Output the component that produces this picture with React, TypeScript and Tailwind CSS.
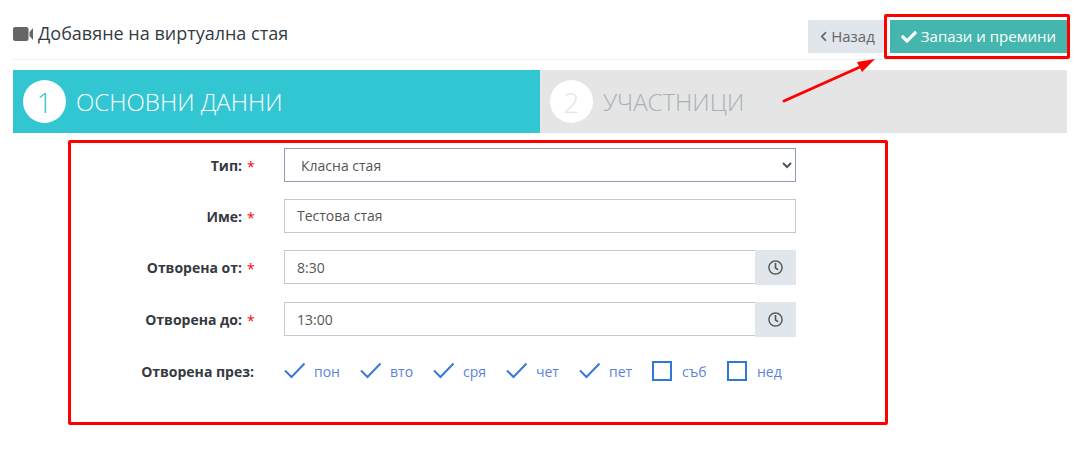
import { FaCheck, FaChevronLeft, FaRegClock } from "react-icons/fa";

const days = [
  { name: "пон", on: true, width: "w-[76px]" },
  { name: "вто", on: true, width: "w-[73px]" },
  { name: "сря", on: true, width: "w-[73px]" },
  { name: "чет", on: true, width: "w-[73px]" },
  { name: "пет", on: true, width: "w-[73px]" },
  { name: "съб", on: false, width: "w-[75px]" },
  { name: "нед", on: false, width: "w-[73px]" },
];

function FieldLabel({ text, required = true }: { text: string; required?: boolean }) {
  return (
    <div className="w-[284px] pr-[30px] flex justify-end items-center shrink-0 text-[14px] font-bold text-[#343a40]">
      <span>{text}</span>
      {required && <span className="text-[#ff0000] font-normal ml-[5px] w-[7px] pt-[2px]">*</span>}
    </div>
  );
}

function TimeField({ value }: { value: string }) {
  return (
    <div className="flex w-[512px] h-[34px]">
      <div className="flex-1 border border-[#c2cad8] border-r-0 pl-[12px] flex items-center text-[14px] text-[#555]">
        {value}
      </div>
      <div className="w-[41px] h-[35px] bg-[#e1e5ec] flex items-center justify-center">
        <FaRegClock size={15} className="text-[#555]" />
      </div>
    </div>
  );
}

function Day({ name, on, width }: { name: string; on: boolean; width: string }) {
  return (
    <div className={`flex items-center shrink-0 ${width}`}>
      <div className="w-[22px] h-[22px] flex items-center shrink-0">
        {on ? (
          <svg width="22" height="18" viewBox="0 0 22 18" fill="none">
            <path d="M1 8.5 L7.5 15 L20.5 1.5" stroke="#3a78d4" strokeWidth="2" />
          </svg>
        ) : (
          <div className="w-[20px] h-[20px] border-2 border-[#2f78d6]"></div>
        )}
      </div>
      <span className="ml-[8px] text-[14px] text-[#5b83dc]">{name}</span>
    </div>
  );
}

export default function App() {
  return (
    <div className="relative w-[1076px] h-[474px] bg-white overflow-hidden font-['Open_Sans',sans-serif]">
      <div className="pt-[20px]">
        <div className="ml-[13px] mr-[9px] flex justify-between h-[40px] border-b border-[#eeeeee]">
          <div className="flex items-start pt-[1px] text-[#333b45]">
            <svg width="20" height="14" viewBox="0 0 20 14" className="mt-[6px]">
              <rect x="0" y="0" width="15.5" height="14" rx="2" fill="#666" />
              <path d="M16.5 5 L20 1 V13 L16.5 9 Z" fill="#666" />
            </svg>
            <span className="ml-[5px] text-[18px] leading-[24px]">Добавяне на виртуална стая</span>
          </div>
          <div className="flex gap-[5px] h-[33px]">
            <button className="w-[77px] bg-[#e1e5ec] text-[#666] text-[15px] flex items-center justify-center">
              <FaChevronLeft size={11} className="text-[#666]" />
              <span className="ml-[2px]">Назад</span>
            </button>
            <button className="w-[177px] bg-[#44b6ae] text-white text-[15px] flex items-center justify-center">
              <FaCheck size={16} className="mr-[4px]" />
              Запази и премини
            </button>
          </div>
        </div>
        <div className="ml-[13px] mr-[9px] flex mt-[10px] h-[63px]">
          <div className="w-[527px] bg-[#32c5d2] flex items-center pl-[10px]">
            <div className="w-[43px] h-[43px] rounded-full bg-white flex items-center justify-center text-[#32c5d2] text-[28px] font-light">1</div>
            <span className="ml-[10px] text-[24px] font-light text-white">ОСНОВНИ ДАННИ</span>
          </div>
          <div className="flex-1 bg-[#e5e5e5] flex items-center pl-[10px]">
            <div className="w-[43px] h-[43px] rounded-full bg-white flex items-center justify-center text-[#e5e5e5] text-[28px] font-light">2</div>
            <span className="ml-[10px] text-[24px] font-light text-[#a6b2b8]">УЧАСТНИЦИ</span>
          </div>
        </div>
        <div className="mt-[15px] flex flex-col gap-[17px]">
          <div className="flex h-[34px]">
            <FieldLabel text="Тип:" />
            <select className="w-[512px] h-[34px] border border-[#8e9bb3] pl-[12px] text-[14px] text-[#555] bg-white" defaultValue="Класна стая">
              <option>Класна стая</option>
            </select>
          </div>
          <div className="flex h-[34px]">
            <FieldLabel text="Име:" />
            <div className="w-[512px] border border-[#c2cad8] pl-[12px] pb-[2px] flex items-center text-[14px] text-[#555]">Тестова стая</div>
          </div>
          <div className="flex h-[34px]">
            <FieldLabel text="Отворена от:" />
            <TimeField value="8:30" />
          </div>
          <div className="flex h-[34px] mt-[1px]">
            <FieldLabel text="Отворена до:" />
            <TimeField value="13:00" />
          </div>
          <div className="flex h-[34px] items-center mt-[1px]">
            <FieldLabel text="Отворена през:" required={false} />
            <div className="flex">
              {days.map((d) => (
                <Day key={d.name} name={d.name} on={d.on} width={d.width} />
              ))}
            </div>
          </div>
        </div>
      </div>

      {/* red annotations drawn over the screenshot */}
      <div className="absolute left-[884px] top-[14px] w-[186px] h-[45px] border-[3px] border-[#ff0000] rounded-[2px]"></div>
      <div className="absolute left-[68px] top-[140px] w-[820px] h-[285px] border-[3px] border-[#ff0000] rounded-[2px]"></div>
      <svg className="absolute left-[775px] top-[50px]" width="110" height="60" viewBox="0 0 110 60" fill="none">
        <path d="M9 51 L85 17" stroke="#ff0000" strokeWidth="3" strokeLinecap="round" />
        <path d="M100 9 L82 12 L87 22 Z" fill="#ff0000" />
      </svg>
    </div>
  );
}
